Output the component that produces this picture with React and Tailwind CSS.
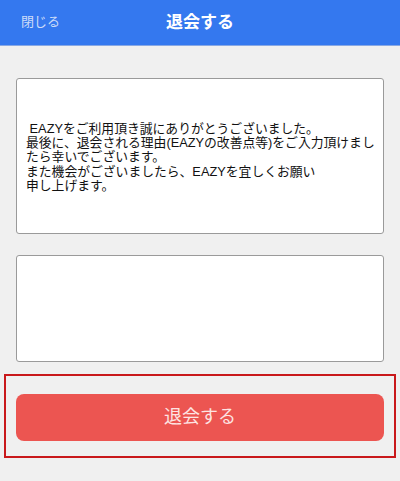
import React from 'react';

const font = { fontFamily: '"Liberation Sans", "Noto Sans CJK JP", sans-serif' };

export default function App() {
    return (
        <div className="w-[400px] h-[481px] bg-[#f0f0f0] flex flex-col" style={font}>
            {/* Header */}
            <div className="h-[46px] bg-[#3478ef] border-b border-[#88a8e4] relative flex items-center justify-center">
                <span className="absolute left-[21px] top-[12px] text-[13px] text-[#cddcf8]">閉じる</span>
                <span className="text-[17px] font-bold text-white">退会する</span>
            </div>

            {/* Message */}
            <div className="mt-[32px] mx-[16px] h-[156px] bg-white border border-[#9a9a9a] rounded-[3px] flex flex-col justify-center px-[9px] pt-[3px] text-[12.8px] leading-[14.3px] text-[#111]">
                <span className="whitespace-nowrap">&nbsp;EAZYをご利用頂き誠にありがとうございました。</span>
                <span className="whitespace-nowrap">最後に、退会される理由(EAZYの改善点等)をご入力頂けまし</span>
                <span className="whitespace-nowrap">たら幸いでございます。</span>
                <span className="whitespace-nowrap">また機会がございましたら、EAZYを宜しくお願い</span>
                <span className="whitespace-nowrap">申し上げます。</span>
            </div>

            {/* Reason input */}
            <textarea className="mt-[21px] mx-[16px] h-[107px] bg-white border border-[#9a9a9a] rounded-[3px] resize-none outline-none p-2 text-[13px]" />

            {/* Submit area */}
            <div className="mt-[12px] mx-[4px] h-[84px] border-2 border-[#c9191b] px-[10px] pt-[18px]">
                <button className="w-full h-[47px] bg-[#ec5551] rounded-[8px] text-[18px] text-[#fde4e2]">
                    退会する
                </button>
            </div>
        </div>
    );
}
